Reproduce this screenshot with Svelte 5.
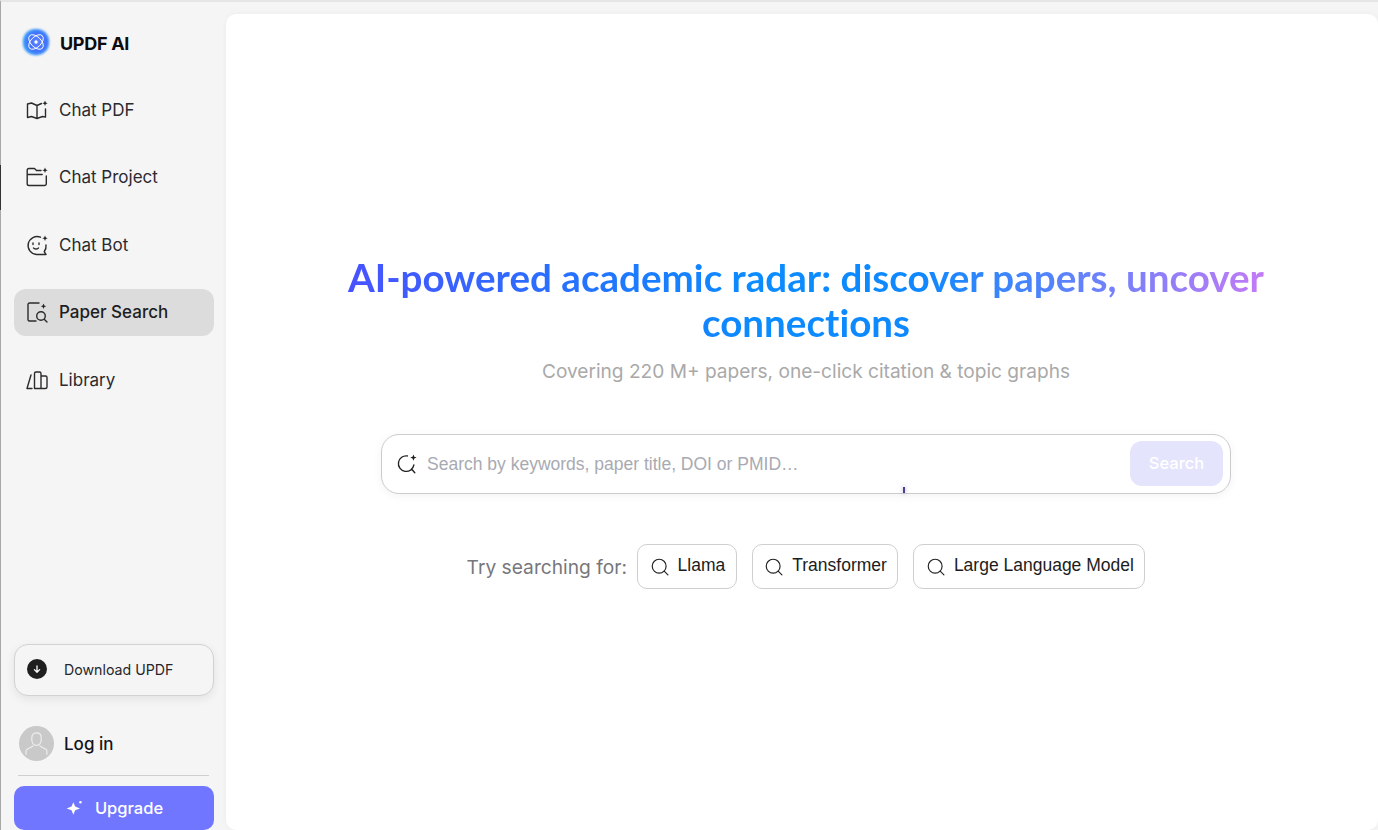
<script lang="ts">
	const chips = ['Llama', 'Transformer', 'Large Language Model'];
</script>

<div class="app">
	<aside class="sidebar">
		<div class="brand">
			<svg class="logo" viewBox="0 0 32 32" fill="none" stroke="#fff" stroke-width="1">
				<defs>
					<radialGradient id="logo-bg" cx="0.55" cy="0.5" r="0.62">
						<stop offset="0" stop-color="#5f86ff" />
						<stop offset="0.55" stop-color="#4170fb" />
						<stop offset="1" stop-color="#35b4fb" />
					</radialGradient>
					<filter id="logo-blur" x="-20%" y="-20%" width="140%" height="140%">
						<feGaussianBlur stdDeviation="1.200" />
					</filter>
				</defs>
				<rect x="2" y="2" width="28" height="28" rx="13" fill="url(#logo-bg)" stroke="none" filter="url(#logo-blur)" />
				<ellipse cx="16" cy="16" rx="9.500" ry="5.500" transform="rotate(45 16 16)" />
				<ellipse cx="16" cy="16" rx="9.500" ry="5.500" transform="rotate(-45 16 16)" />
				<circle cx="16" cy="16" r="1.800" fill="#fff" stroke="none" />
			</svg>
			<span>UPDF AI</span>
		</div>

		<nav class="nav">
			<a class="nav-item" href="#pdf">
				<svg viewBox="0 0 24 24"><path d="M16.500 5.500 12 7.500 6.500 5 2.500 6v13.500l4-1 5.500 2 5.500-2 3 .6V11M12 7.500V20.500" /><path class="spark" d="M20 2.500l.8 1.900 1.900.8-1.900.8-.8 1.900-.8-1.900-1.900-.8 1.900-.8z" /></svg>
				<span>Chat PDF</span>
			</a>
			<a class="nav-item" href="#project">
				<svg viewBox="0 0 24 24"><path d="M16 5.500h-4.500L9.500 3.500H4A1.800 1.800 0 0 0 2.200 5.300v13.400A1.800 1.800 0 0 0 4 20.500h15.500a1.800 1.800 0 0 0 1.800-1.800V11M2.200 9.500h15" /><path class="spark" d="M20 2.500l.8 1.900 1.900.8-1.900.8-.8 1.900-.8-1.900-1.900-.8 1.900-.8z" /></svg>
				<span>Chat Project</span>
			</a>
			<a class="nav-item" href="#bot">
				<svg viewBox="0 0 24 24"><path d="M15.500 4.200A9 9 0 1 0 11.500 21.500h9.500l-1.800-2.800A9 9 0 0 0 21 12" /><path d="M8 10v1.500M14 10v1.500M8.500 15c1.500 1.300 3.500 1.300 5 0" /><path class="spark" d="M20 2.500l.8 1.900 1.900.8-1.900.8-.8 1.900-.8-1.900-1.900-.8 1.900-.8z" /></svg>
				<span>Chat Bot</span>
			</a>
			<a class="nav-item active" href="#search">
				<svg viewBox="0 0 24 24"><path d="M14 3H4.500A1.500 1.500 0 0 0 3 4.500v15A1.500 1.500 0 0 0 4.500 21H11" /><circle cx="16" cy="16" r="4.300" /><path d="M19.200 19.200 22 22" /><path class="spark" d="M18.500 3.500l.8 1.900 1.900.8-1.900.8-.8 1.900-.8-1.900-1.900-.8 1.900-.8z" /></svg>
				<span>Paper Search</span>
			</a>
			<a class="nav-item" href="#library">
				<svg viewBox="0 0 24 24"><path d="M6 7 2 20.500h5M9.500 20.500V5.500A1.500 1.500 0 0 1 11 4h3.500A1.500 1.500 0 0 1 16 5.500v15zM16 8h4.500A1.500 1.500 0 0 1 22 9.500v9.500a1.500 1.500 0 0 1-1.500 1.500H16" /></svg>
				<span>Library</span>
			</a>
		</nav>

		<div class="bottom">
			<button class="download">
				<span class="dl-icon">
					<svg viewBox="0 0 24 24"><path d="M12 6.500v11M7.500 13l4.500 4.500 4.500-4.500" /></svg>
				</span>
				<span>Download UPDF</span>
			</button>
			<div class="login">
				<span class="avatar">
					<svg viewBox="0 0 36 36"><path d="M18 7c-3 0-4.800 2-4.800 5v2.500c0 3 2 5.500 4.800 5.500s4.800-2.500 4.800-5.500V12c0-3-1.800-5-4.800-5zM14.500 20.500 8.500 24c-.8.500-1.200 1.200-1.200 2v3M21.500 20.500l6 3.500c.8.500 1.200 1.200 1.200 2v3" /></svg>
				</span>
				<span>Log in</span>
			</div>
			<div class="divider"></div>
			<button class="upgrade">
				<svg viewBox="0 0 24 24"><path d="M10 5l2.200 5.300L18 12.500l-5.800 2.200L10 20l-2.200-5.300L2 12.500l5.800-2.200z" /><circle cx="18.500" cy="5" r="1.500" /></svg>
				<span>Upgrade</span>
			</button>
		</div>
	</aside>

	<main class="main">
		<h1>AI-powered academic radar: discover papers, uncover connections</h1>
		<p class="subtitle">Covering 220 M+ papers, one-click citation &amp; topic graphs</p>

		<div class="search">
			<svg class="search-icon" viewBox="0 0 24 24"><path d="M12.500 3.200A8.500 8.500 0 1 0 19.500 13M17 17.500l3.500 4" /><path class="spark" d="M19 1.500l1 2.500 2.500 1-2.500 1-1 2.500-1-2.500-2.500-1 2.500-1z" /></svg>
			<input type="text" placeholder="Search by keywords, paper title, DOI or PMID…" />
			<button class="search-btn">Search</button>
			<span class="cursor-dot"></span>
		</div>

		<div class="tries">
			<span class="try-label">Try searching for:</span>
			{#each chips as chip}
				<button class="chip">
					<svg viewBox="0 0 24 24"><circle cx="11" cy="11" r="8.300" /><path d="M17 17l4.500 4.500" /></svg>
					<span>{chip}</span>
				</button>
			{/each}
		</div>
	</main>
</div>

<style>
	:global(body) {
		margin: 0;
		background: #f5f5f5;
		overflow: hidden;
	}

	.app {
		display: flex;
		height: 830px;
		box-sizing: border-box;
		border-top: 2px solid #e6e6e6;
		border-left: 1px solid #a8a8a8;
		font-family: Inter, "Liberation Sans", sans-serif;
		color: #1d1d22;
		position: relative;
	}

	.app::before {
		content: '';
		position: absolute;
		left: -1px;
		top: 163px;
		width: 1px;
		height: 45px;
		background: #333;
	}

	.sidebar {
		width: 225px;
		flex-shrink: 0;
		display: flex;
		flex-direction: column;
		box-sizing: border-box;
		padding: 0 12px 0 13px;
	}

	.brand {
		display: flex;
		align-items: center;
		gap: 8px;
		height: 30px;
		margin: 25px 0 0 7px;
		font-size: 18px;
		font-weight: 700;
		color: #0c0c10;
		letter-spacing: -0.3px;
	}

	.brand span {
		position: relative;
		top: 1px;
		left: 1px;
	}

	.logo {
		width: 30px;
		height: 30px;
	}

	.nav {
		display: flex;
		flex-direction: column;
		gap: 20.500px;
		margin-top: 29px;
	}

	.nav-item {
		display: flex;
		align-items: center;
		gap: 10px;
		height: 47px;
		padding-left: 11px;
		border-radius: 12px;
		font-size: 17px;
		color: #2a2a30;
		text-decoration: none;
	}

	.nav-item svg {
		width: 24px;
		height: 24px;
		fill: none;
		stroke: #2b2b2b;
		stroke-width: 1.400;
		stroke-linejoin: round;
		stroke-linecap: round;
	}

	.nav-item .spark,
	.search-icon .spark {
		fill: #222;
		stroke: none;
	}

	.nav-item.active {
		background: #dcdcdc;
		font-weight: 500;
		color: #1d1d22;
	}

	.bottom {
		margin-top: auto;
		display: flex;
		flex-direction: column;
	}

	.download {
		display: flex;
		align-items: center;
		gap: 17px;
		height: 52px;
		padding: 0 12px 2px;
		box-sizing: border-box;
		background: #f5f5f5;
		border: 1px solid #d2d2d2;
		border-radius: 14px;
		box-shadow: 0 3px 10px rgba(0, 0, 0, 0.08);
		font-family: inherit;
		font-size: 14.200px;
		color: #26262c;
	}

	.dl-icon {
		width: 20px;
		height: 20px;
		border-radius: 50%;
		background: #1f1f1f;
		display: flex;
		align-items: center;
		justify-content: center;
	}

	.dl-icon svg {
		width: 14px;
		height: 14px;
		fill: none;
		stroke: #fff;
		stroke-width: 2.200;
		stroke-linecap: round;
		stroke-linejoin: round;
	}

	.login {
		display: flex;
		align-items: center;
		gap: 10px;
		margin: 30px 0 0 5px;
		font-size: 17px;
		font-weight: 500;
		color: #14141a;
	}

	.avatar {
		width: 35px;
		height: 35px;
		border-radius: 50%;
		background: #c9c9c9;
		display: block;
	}

	.avatar svg {
		width: 35px;
		height: 35px;
		fill: none;
		stroke: #eee;
		stroke-width: 1.200;
		stroke-linecap: round;
		stroke-linejoin: round;
	}

	.divider {
		height: 1px;
		background: #cfcfcf;
		margin: 14px 5px 10px 4px;
	}

	.upgrade {
		height: 44px;
		display: flex;
		align-items: center;
		justify-content: center;
		gap: 10px;
		padding-bottom: 2px;
		border: 0;
		border-radius: 10px;
		background: #7076ff;
		color: #fff;
		font-family: inherit;
		font-size: 16.500px;
		font-weight: 500;
	}

	.upgrade svg {
		width: 20px;
		height: 20px;
		fill: #fff;
	}

	.main {
		flex: 1;
		margin-top: 12px;
		background: #fff;
		border-radius: 10px;
		padding: 241px 0 0 8px;
		display: flex;
		flex-direction: column;
		align-items: center;
		box-shadow: 0 0 6px rgba(0, 0, 0, 0.04);
	}

	h1 {
		width: 950px;
		margin: 0;
		text-align: center;
		font-family: Lato, "Noto Sans", sans-serif;
		font-size: 38.600px;
		font-weight: 700;
		line-height: 45px;
		font-variant-ligatures: none;
		background: linear-gradient(90deg, #4b50ff 0, #0a8cff 45%, #0f88ff 62%, #cc7af5 100%);
		-webkit-background-clip: text;
		background-clip: text;
		color: transparent;
	}

	.subtitle {
		margin: 13px 0 0;
		font-size: 19.100px;
		line-height: 26px;
		color: #a9a9a9;
	}

	.search {
		width: 850px;
		height: 60px;
		margin-top: 50px;
		box-sizing: border-box;
		display: flex;
		align-items: center;
		padding: 0 7px 0 14px;
		border: 1px solid #cccccc;
		border-radius: 18px;
		background: #fff;
		box-shadow: 0 2px 10px rgba(0, 0, 0, 0.05);
		position: relative;
	}

	.search-icon {
		width: 22px;
		height: 22px;
		fill: none;
		stroke: #222;
		stroke-width: 1.500;
		stroke-linecap: round;
		flex-shrink: 0;
	}

	.search input {
		flex: 1;
		min-width: 0;
		margin-left: 7px;
		border: 0;
		outline: 0;
		background: none;
		font-family: "Liberation Sans", Arial, sans-serif;
		font-size: 17.500px;
		color: #222;
	}

	.search input::placeholder {
		color: #a8aab2;
		opacity: 1;
	}

	.search-btn {
		width: 93px;
		height: 45px;
		margin-bottom: 2px;
		border: 0;
		border-radius: 12px;
		background: #e4e4fd;
		color: #fff;
		font-family: inherit;
		font-size: 16.500px;
		font-weight: 500;
	}

	.cursor-dot {
		position: absolute;
		left: 521px;
		top: 52px;
		width: 2px;
		height: 6px;
		background: #4a3f8f;
		box-shadow: 0 0 4px rgba(74, 63, 143, 0.5);
		filter: blur(0.5px);
	}

	.tries {
		display: flex;
		align-items: center;
		gap: 15px;
		margin-top: 50px;
	}

	.try-label {
		font-size: 19.200px;
		color: #77777c;
		margin-right: -5px;
	}

	.chip {
		height: 45px;
		display: flex;
		align-items: center;
		gap: 8px;
		box-sizing: border-box;
		padding: 0 10.500px 0 11.500px;
		border: 1px solid #cfcfcf;
		border-radius: 10px;
		background: #fff;
		font-family: "Liberation Sans", Arial, sans-serif;
		font-size: 17.500px;
		color: #1c1c20;
	}

	.chip span {
		position: relative;
		top: -1px;
	}

	.chip svg {
		width: 20px;
		height: 20px;
		fill: none;
		stroke: #222;
		stroke-width: 1.400;
		stroke-linecap: round;
	}
</style>
